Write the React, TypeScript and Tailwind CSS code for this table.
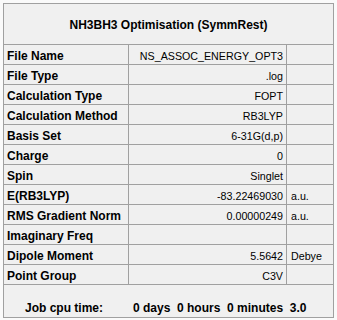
import React from "react";

const rows: [string, string, string][] = [
  ["File Name", "NS_ASSOC_ENERGY_OPT3", ""],
  ["File Type", ".log", ""],
  ["Calculation Type", "FOPT", ""],
  ["Calculation Method", "RB3LYP", ""],
  ["Basis Set", "6-31G(d,p)", ""],
  ["Charge", "0", ""],
  ["Spin", "Singlet", ""],
  ["E(RB3LYP)", "-83.22469030", "a.u."],
  ["RMS Gradient Norm", "0.00000249", "a.u."],
  ["Imaginary Freq", "", ""],
  ["Dipole Moment", "5.5642", "Debye"],
  ["Point Group", "C3V", ""],
];

export default function App() {
  return (
    <div
      className="w-[337px] h-[320px] bg-[#fafafa] pl-[3px] pt-[3px] overflow-hidden text-black"
      style={{ fontFamily: '"Liberation Sans", Arial, sans-serif' }}
    >
      <div className="w-[331px] h-[315px] border border-[#a0a0a0] bg-[#f0f0f0] flex flex-col">
        <div className="h-[40px] flex items-center justify-center text-[12px] font-bold leading-[14px] pt-[1px]">
          NH3BH3 Optimisation (SymmRest)
        </div>
        <div className="flex flex-col border-b border-[#a0a0a0]">
          {rows.map(([label, value, unit]) => (
            <div key={label} className="h-[20px] flex border-t border-[#a0a0a0]">
              <div className="w-[125px] border-r border-[#a0a0a0] pl-[3px] pt-[4px] text-[12px] font-bold leading-[14px] whitespace-nowrap">
                {label}
              </div>
              <div className="w-[158px] border-r border-[#a0a0a0] pr-[3px] pt-[4px] text-[10.7px] leading-[14px] text-right whitespace-nowrap">
                {value}
              </div>
              <div className="flex-1 pl-[4px] pt-[4px] text-[10.7px] leading-[14px] whitespace-nowrap">
                {unit}
              </div>
            </div>
          ))}
        </div>
        <div className="flex pt-[16px] text-[12px] font-bold leading-[14px] whitespace-pre">
          <div className="w-[129px] pl-[21px]">Job cpu time:</div>
          <div>0 days  0 hours  0 minutes  3.0</div>
        </div>
      </div>
    </div>
  );
}
